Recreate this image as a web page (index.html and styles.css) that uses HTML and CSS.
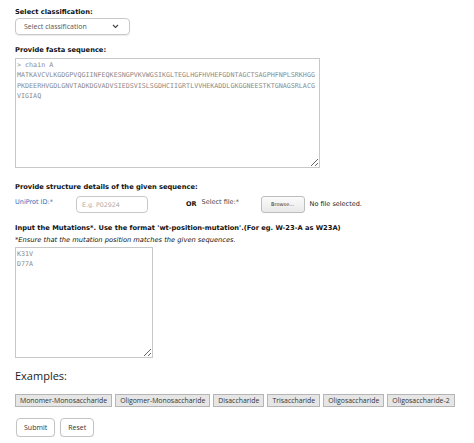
FILE: index.html
```html
<!DOCTYPE html>
<html lang="en">
<head>
  <meta charset="UTF-8">
  <meta name="viewport" content="width=device-width, initial-scale=1.0">
  <title>Mutation Submission</title>
  <link rel="stylesheet" href="styles.css">
</head>
<body>
  <form class="job-form">
    <!-- Classification dropdown -->
    <div class="field-label">Select classification:</div>
    <div class="select-box">
      <span>Select classification</span>
      <svg class="chevron" width="7" height="5" viewBox="0 0 7 5">
        <path d="M1 1 L3.5 3.5 L6 1" fill="none" stroke="#444" stroke-width="1.1"/>
      </svg>
    </div>

    <!-- Sequence input -->
    <div class="field-label gap-top">Provide fasta sequence:</div>
    <textarea class="fasta-box" spellcheck="false">&gt; chain A
MATKAVCVLKGDGPVQGIINFEQKESNGPVKVWGSIKGLTEGLHGFHVHEFGDNTAGCTSAGPHFNPLSRKHGG
PKDEERHVGDLGNVTADKDGVADVSIEDSVISLSGDHCIIGRTLVVHEKADDLGKGGNEESTKTGNAGSRLACG
VIGIAQ</textarea>

    <!-- Structure source -->
    <div class="field-label gap-top-lg">Provide structure details of the given sequence:</div>
    <div class="structure-row">
      <span class="uniprot-label">UniProt ID:*</span>
      <input class="uniprot-input" type="text" placeholder="E.g. P02924">
      <span class="or-text">OR</span>
      <span class="file-label">Select file:*</span>
      <button type="button" class="browse-btn">Browse...</button>
      <span class="file-status">No file selected.</span>
    </div>

    <!-- Mutations -->
    <div class="field-label gap-top">Input the Mutations*. Use the format 'wt-position-mutation'.(For eg. W-23-A as W23A)</div>
    <div class="note">*Ensure that the mutation position matches the given sequences.</div>
    <textarea class="mutation-box" spellcheck="false">K31V
D77A</textarea>

    <h3 class="examples-title">Examples:</h3>
    <div class="example-list">
      <button type="button" class="example-btn">Monomer-Monosaccharide</button>
      <button type="button" class="example-btn">Oligomer-Monosaccharide</button>
      <button type="button" class="example-btn">Disaccharide</button>
      <button type="button" class="example-btn">Trisaccharide</button>
      <button type="button" class="example-btn">Oligosaccharide</button>
      <button type="button" class="example-btn">Oligosaccharide-2</button>
    </div>

    <div class="actions">
      <button type="submit" class="action-btn">Submit</button>
      <button type="reset" class="action-btn">Reset</button>
    </div>
  </form>
</body>
</html>
```

FILE: styles.css
```css
/* Page base */
body {
  margin: 0;
  background-color: white;
  color: #111;
  font-family: 'DejaVu Sans', sans-serif;
}

.job-form {
  padding: 8px 0 0 15px;
}

/* Bold field labels */
.field-label {
  font-size: 6.7px;
  font-weight: bold;
  line-height: 8px;
  white-space: nowrap;
}

.gap-top {
  margin-top: 11px;
}

.gap-top-lg {
  margin-top: 15px;
}

/* Classification select */
.select-box {
  box-sizing: border-box;
  width: 115px;
  height: 17px;
  margin-top: 2px;
  padding: 0 8px;
  border: 1px solid #c8c8c8;
  border-radius: 4px;
  display: flex;
  align-items: center;
  justify-content: space-between;
  font-family: 'Open Sans', sans-serif;
  font-size: 7px;
  color: #555;
  box-shadow: 0 1px 1px rgba(0, 0, 0, 0.08);
}

.chevron {
  margin-right: 2px;
}

/* Text areas */
textarea {
  display: block;
  box-sizing: border-box;
  border: 1px solid #c8c8c8;
  padding: 1px;
  font-family: 'DejaVu Sans Mono', monospace;
  font-size: 6.7px;
  line-height: 10.3px;
  color: #8a8a8a;
  white-space: pre;
  overflow: hidden;
}

.fasta-box {
  width: 305px;
  height: 110px;
  margin-top: 4px;
}

.mutation-box {
  width: 138px;
  height: 111px;
  margin-top: 3px;
}

/* Structure row */
.structure-row {
  display: flex;
  align-items: center;
  height: 18px;
  margin-top: 4px;
  font-size: 6.5px;
}

.uniprot-label {
  width: 61px;
  color: #2a6ebb;
  margin-bottom: 4px;
}

.uniprot-input {
  box-sizing: border-box;
  width: 72px;
  height: 17px;
  border: 1px solid #c8c8c8;
  border-radius: 4px;
  padding: 0 5px;
  font-family: 'DejaVu Sans', sans-serif;
  font-size: 6.3px;
}

.uniprot-input::placeholder {
  color: #aaa;
}

.or-text {
  margin-left: 38px;
  font-weight: bold;
}

.file-label {
  margin-left: 5px;
  width: 59px;
  color: #444;
  margin-bottom: 4px;
}

.browse-btn {
  box-sizing: border-box;
  width: 44px;
  height: 17px;
  padding: 0;
  border: 1px solid #bdbdbd;
  border-radius: 3px;
  background: linear-gradient(#fbfbfb, #e9e9e9);
  font-family: 'DejaVu Sans', sans-serif;
  font-size: 5px;
  color: #333;
}

.file-status {
  margin-left: 5px;
  color: #222;
}

/* Mutation hint */
.note {
  margin-top: 4px;
  font-size: 6.7px;
  font-style: italic;
  line-height: 8px;
  white-space: nowrap;
}

/* Examples */
.examples-title {
  margin: 11px 0 0 0;
  font-family: 'Open Sans', sans-serif;
  font-size: 11px;
  font-weight: normal;
  line-height: 14px;
  color: #222;
}

.example-list {
  display: flex;
  gap: 3px;
  margin-top: 11px;
}

.example-btn {
  height: 13px;
  padding: 0 4px;
  border: 1px solid #b5b5b5;
  border-radius: 0;
  background-color: #e6e6e6;
  font-family: 'Open Sans', sans-serif;
  font-size: 6.9px;
  color: #333;
}

.actions {
  display: flex;
  gap: 5px;
  margin-top: 11px;
  padding-left: 1px;
}

.action-btn {
  height: 19px;
  padding: 0 7px;
  border: 1px solid #c4c4c4;
  border-radius: 4px;
  background-color: white;
  font-family: 'Open Sans', sans-serif;
  font-size: 7px;
  color: #333;
  box-shadow: 0 1px 1px rgba(0, 0, 0, 0.08);
}
```
